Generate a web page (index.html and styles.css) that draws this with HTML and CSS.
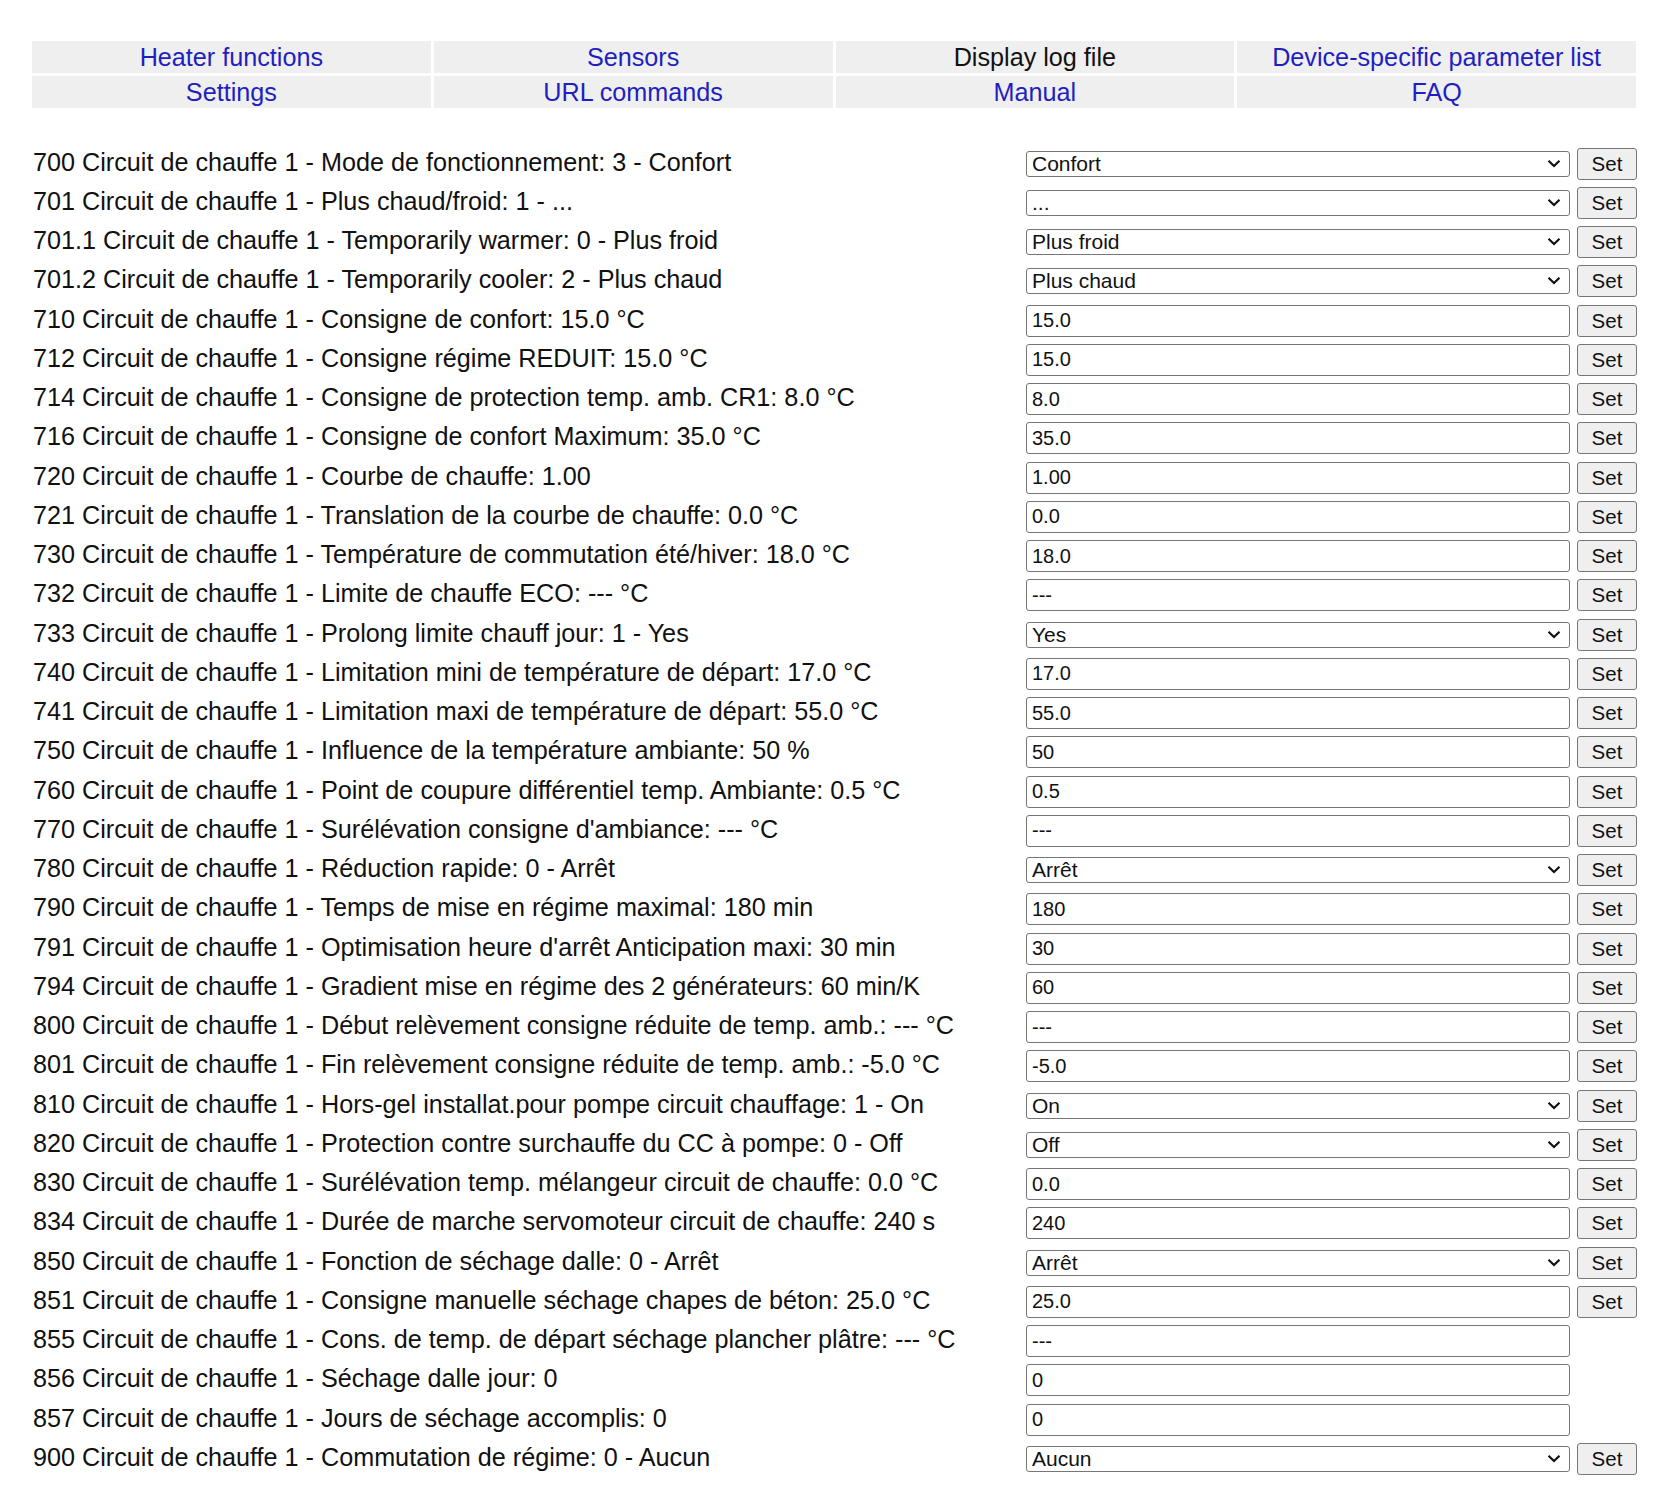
FILE: index.html
```html
<!DOCTYPE html>
<html lang="fr">
<head>
<meta charset="utf-8">
<title>BSB-LAN</title>
<link rel="stylesheet" href="styles.css">
</head>
<body>
<nav class="nav">
  <a class="nav-link" href="#">Heater functions</a>
  <a class="nav-link" href="#">Sensors</a>
  <a class="nav-link nav-plain" href="#">Display log file</a>
  <a class="nav-link" href="#">Device-specific parameter list</a>
  <a class="nav-link" href="#">Settings</a>
  <a class="nav-link" href="#">URL commands</a>
  <a class="nav-link" href="#">Manual</a>
  <a class="nav-link" href="#">FAQ</a>
</nav>

<main class="params">
  <div class="row"><span class="label">700 Circuit de chauffe 1 - Mode de fonctionnement: 3 - Confort</span><div class="sel"><select class="ctl-select"><option>Confort</option></select><svg class="chev" viewBox="0 0 14 9" width="14" height="9"><path d="M1.5 1.8 L7 7 L12.5 1.8" fill="none" stroke="#111" stroke-width="2.2"/></svg></div><button class="set">Set</button></div>
  <div class="row"><span class="label">701 Circuit de chauffe 1 - Plus chaud/froid: 1 - ...</span><div class="sel"><select class="ctl-select"><option>...</option></select><svg class="chev" viewBox="0 0 14 9" width="14" height="9"><path d="M1.5 1.8 L7 7 L12.5 1.8" fill="none" stroke="#111" stroke-width="2.2"/></svg></div><button class="set">Set</button></div>
  <div class="row"><span class="label">701.1 Circuit de chauffe 1 - Temporarily warmer: 0 - Plus froid</span><div class="sel"><select class="ctl-select"><option>Plus froid</option></select><svg class="chev" viewBox="0 0 14 9" width="14" height="9"><path d="M1.5 1.8 L7 7 L12.5 1.8" fill="none" stroke="#111" stroke-width="2.2"/></svg></div><button class="set">Set</button></div>
  <div class="row"><span class="label">701.2 Circuit de chauffe 1 - Temporarily cooler: 2 - Plus chaud</span><div class="sel"><select class="ctl-select"><option>Plus chaud</option></select><svg class="chev" viewBox="0 0 14 9" width="14" height="9"><path d="M1.5 1.8 L7 7 L12.5 1.8" fill="none" stroke="#111" stroke-width="2.2"/></svg></div><button class="set">Set</button></div>
  <div class="row"><span class="label">710 Circuit de chauffe 1 - Consigne de confort: 15.0 °C</span><input class="ctl-input" type="text" value="15.0"><button class="set">Set</button></div>
  <div class="row"><span class="label">712 Circuit de chauffe 1 - Consigne régime REDUIT: 15.0 °C</span><input class="ctl-input" type="text" value="15.0"><button class="set">Set</button></div>
  <div class="row"><span class="label">714 Circuit de chauffe 1 - Consigne de protection temp. amb. CR1: 8.0 °C</span><input class="ctl-input" type="text" value="8.0"><button class="set">Set</button></div>
  <div class="row"><span class="label">716 Circuit de chauffe 1 - Consigne de confort Maximum: 35.0 °C</span><input class="ctl-input" type="text" value="35.0"><button class="set">Set</button></div>
  <div class="row"><span class="label">720 Circuit de chauffe 1 - Courbe de chauffe: 1.00</span><input class="ctl-input" type="text" value="1.00"><button class="set">Set</button></div>
  <div class="row"><span class="label">721 Circuit de chauffe 1 - Translation de la courbe de chauffe: 0.0 °C</span><input class="ctl-input" type="text" value="0.0"><button class="set">Set</button></div>
  <div class="row"><span class="label">730 Circuit de chauffe 1 - Température de commutation été/hiver: 18.0 °C</span><input class="ctl-input" type="text" value="18.0"><button class="set">Set</button></div>
  <div class="row"><span class="label">732 Circuit de chauffe 1 - Limite de chauffe ECO: --- °C</span><input class="ctl-input" type="text" value="---"><button class="set">Set</button></div>
  <div class="row"><span class="label">733 Circuit de chauffe 1 - Prolong limite chauff jour: 1 - Yes</span><div class="sel"><select class="ctl-select"><option>Yes</option></select><svg class="chev" viewBox="0 0 14 9" width="14" height="9"><path d="M1.5 1.8 L7 7 L12.5 1.8" fill="none" stroke="#111" stroke-width="2.2"/></svg></div><button class="set">Set</button></div>
  <div class="row"><span class="label">740 Circuit de chauffe 1 - Limitation mini de température de départ: 17.0 °C</span><input class="ctl-input" type="text" value="17.0"><button class="set">Set</button></div>
  <div class="row"><span class="label">741 Circuit de chauffe 1 - Limitation maxi de température de départ: 55.0 °C</span><input class="ctl-input" type="text" value="55.0"><button class="set">Set</button></div>
  <div class="row"><span class="label">750 Circuit de chauffe 1 - Influence de la température ambiante: 50 %</span><input class="ctl-input" type="text" value="50"><button class="set">Set</button></div>
  <div class="row"><span class="label">760 Circuit de chauffe 1 - Point de coupure différentiel temp. Ambiante: 0.5 °C</span><input class="ctl-input" type="text" value="0.5"><button class="set">Set</button></div>
  <div class="row"><span class="label">770 Circuit de chauffe 1 - Surélévation consigne d'ambiance: --- °C</span><input class="ctl-input" type="text" value="---"><button class="set">Set</button></div>
  <div class="row"><span class="label">780 Circuit de chauffe 1 - Réduction rapide: 0 - Arrêt</span><div class="sel"><select class="ctl-select"><option>Arrêt</option></select><svg class="chev" viewBox="0 0 14 9" width="14" height="9"><path d="M1.5 1.8 L7 7 L12.5 1.8" fill="none" stroke="#111" stroke-width="2.2"/></svg></div><button class="set">Set</button></div>
  <div class="row"><span class="label">790 Circuit de chauffe 1 - Temps de mise en régime maximal: 180 min</span><input class="ctl-input" type="text" value="180"><button class="set">Set</button></div>
  <div class="row"><span class="label">791 Circuit de chauffe 1 - Optimisation heure d'arrêt Anticipation maxi: 30 min</span><input class="ctl-input" type="text" value="30"><button class="set">Set</button></div>
  <div class="row"><span class="label">794 Circuit de chauffe 1 - Gradient mise en régime des 2 générateurs: 60 min/K</span><input class="ctl-input" type="text" value="60"><button class="set">Set</button></div>
  <div class="row"><span class="label">800 Circuit de chauffe 1 - Début relèvement consigne réduite de temp. amb.: --- °C</span><input class="ctl-input" type="text" value="---"><button class="set">Set</button></div>
  <div class="row"><span class="label">801 Circuit de chauffe 1 - Fin relèvement consigne réduite de temp. amb.: -5.0 °C</span><input class="ctl-input" type="text" value="-5.0"><button class="set">Set</button></div>
  <div class="row"><span class="label">810 Circuit de chauffe 1 - Hors-gel installat.pour pompe circuit chauffage: 1 - On</span><div class="sel"><select class="ctl-select"><option>On</option></select><svg class="chev" viewBox="0 0 14 9" width="14" height="9"><path d="M1.5 1.8 L7 7 L12.5 1.8" fill="none" stroke="#111" stroke-width="2.2"/></svg></div><button class="set">Set</button></div>
  <div class="row"><span class="label">820 Circuit de chauffe 1 - Protection contre surchauffe du CC à pompe: 0 - Off</span><div class="sel"><select class="ctl-select"><option>Off</option></select><svg class="chev" viewBox="0 0 14 9" width="14" height="9"><path d="M1.5 1.8 L7 7 L12.5 1.8" fill="none" stroke="#111" stroke-width="2.2"/></svg></div><button class="set">Set</button></div>
  <div class="row"><span class="label">830 Circuit de chauffe 1 - Surélévation temp. mélangeur circuit de chauffe: 0.0 °C</span><input class="ctl-input" type="text" value="0.0"><button class="set">Set</button></div>
  <div class="row"><span class="label">834 Circuit de chauffe 1 - Durée de marche servomoteur circuit de chauffe: 240 s</span><input class="ctl-input" type="text" value="240"><button class="set">Set</button></div>
  <div class="row"><span class="label">850 Circuit de chauffe 1 - Fonction de séchage dalle: 0 - Arrêt</span><div class="sel"><select class="ctl-select"><option>Arrêt</option></select><svg class="chev" viewBox="0 0 14 9" width="14" height="9"><path d="M1.5 1.8 L7 7 L12.5 1.8" fill="none" stroke="#111" stroke-width="2.2"/></svg></div><button class="set">Set</button></div>
  <div class="row"><span class="label">851 Circuit de chauffe 1 - Consigne manuelle séchage chapes de béton: 25.0 °C</span><input class="ctl-input" type="text" value="25.0"><button class="set">Set</button></div>
  <div class="row"><span class="label">855 Circuit de chauffe 1 - Cons. de temp. de départ séchage plancher plâtre: --- °C</span><input class="ctl-input" type="text" value="---"></div>
  <div class="row"><span class="label">856 Circuit de chauffe 1 - Séchage dalle jour: 0</span><input class="ctl-input" type="text" value="0"></div>
  <div class="row"><span class="label">857 Circuit de chauffe 1 - Jours de séchage accomplis: 0</span><input class="ctl-input" type="text" value="0"></div>
  <div class="row"><span class="label">900 Circuit de chauffe 1 - Commutation de régime: 0 - Aucun</span><div class="sel"><select class="ctl-select"><option>Aucun</option></select><svg class="chev" viewBox="0 0 14 9" width="14" height="9"><path d="M1.5 1.8 L7 7 L12.5 1.8" fill="none" stroke="#111" stroke-width="2.2"/></svg></div><button class="set">Set</button></div>
</main>
</body>
</html>
```

FILE: styles.css
```css
html, body {
  margin: 0;
  padding: 0;
  background: #ffffff;
}

body {
  font-family: "Liberation Sans", Arial, sans-serif;
  font-size: 25.2px;
  color: #111111;
}

.nav {
  display: grid;
  grid-template-columns: repeat(4, 1fr);
  gap: 3px;
  width: 1604px;
  margin: 41px 0 0 32px;
}

.nav-link {
  display: block;
  height: 32px;
  line-height: 32px;
  background: #efefef;
  color: #1f1fc0;
  text-align: center;
  text-decoration: none;
  white-space: nowrap;
}

.nav-plain {
  color: #111111;
}

.params {
  margin: 36px 0 0 32px;
  width: 1605px;
}

.row {
  display: grid;
  grid-template-columns: 987px 544px 60px;
  column-gap: 7px;
  align-items: center;
  height: 39.25px;
}

.label {
  white-space: nowrap;
  padding-left: 1px;
  padding-bottom: 3px;
}

.sel {
  position: relative;
  height: 26px;
}

.ctl-select {
  -webkit-appearance: none;
  appearance: none;
  display: block;
  box-sizing: border-box;
  width: 544px;
  height: 26px;
  margin: 0;
  padding: 0 30px 0 5px;
  border: 1px solid #767676;
  border-radius: 3px;
  background: #ffffff;
  color: #111111;
  font-family: "Liberation Sans", Arial, sans-serif;
  font-size: 21px;
  line-height: 24px;
}

.chev {
  position: absolute;
  right: 9px;
  top: 8px;
  pointer-events: none;
}

.ctl-input {
  display: block;
  box-sizing: border-box;
  width: 544px;
  height: 32px;
  margin: 0;
  padding: 0 5px;
  border: 1px solid #767676;
  border-radius: 3px;
  background: #ffffff;
  color: #111111;
  font-family: "Liberation Sans", Arial, sans-serif;
  font-size: 20px;
}

.set {
  display: block;
  box-sizing: border-box;
  width: 60px;
  height: 32px;
  margin: 0;
  padding: 0;
  border: 1px solid #767676;
  border-radius: 3px;
  background: #efefef;
  color: #111111;
  font-family: "Liberation Sans", Arial, sans-serif;
  font-size: 20.5px;
}
```
